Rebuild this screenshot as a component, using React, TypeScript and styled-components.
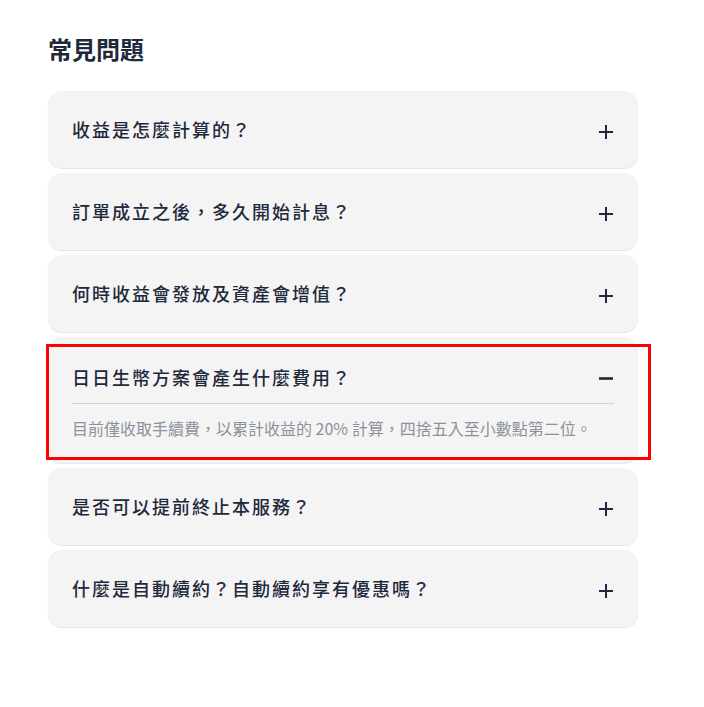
import React, { useState } from "react";
import styled, { createGlobalStyle } from "styled-components";

const Global = createGlobalStyle`
  html, body { margin: 0; padding: 0; background: #ffffff; }
  body { font-family: "Noto Sans CJK TC", "Noto Sans", sans-serif; }
  * { box-sizing: border-box; }
`;

const Page = styled.main`
  padding: 31px 0 40px 48px;
  width: 638px;
`;

const Title = styled.h2`
  margin: 0 0 24px;
  font-size: 24px;
  line-height: 36px;
  font-weight: 700;
  color: #1e293b;
  letter-spacing: 0;
`;

const List = styled.div`
  display: flex;
  flex-direction: column;
  gap: 5px;
`;

const Card = styled.div<{ $open: boolean }>`
  position: relative;
  background: #f4f4f5;
  border-radius: 14px;
  padding: 0 24px;
  box-shadow: 0 1px 1px rgba(203, 213, 225, 0.6);
`;

const Header = styled.button<{ $open: boolean }>`
  all: unset;
  display: flex;
  align-items: center;
  justify-content: space-between;
  width: 100%;
  cursor: pointer;
  padding: ${(p) => (p.$open ? "27px 0 12px" : "25px 0")};
  border-bottom: ${(p) => (p.$open ? "1px solid #cbd5e1" : "none")};
`;

const Question = styled.span`
  font-size: 18px;
  line-height: 27px;
  font-weight: 500;
  color: #1e293b;
  letter-spacing: 2px;
`;

const IconBox = styled.span`
  display: flex;
  width: 16px;
  height: 16px;
  margin-top: 5px;
  color: #1e293b;
`;

const Answer = styled.p`
  margin: 0;
  padding: 12px 0 23px;
  font-size: 16px;
  line-height: 24px;
  color: #8c929b;
  letter-spacing: 0;
`;

const Highlight = styled.div`
  position: absolute;
  left: -2px;
  top: 7px;
  width: 605px;
  height: 116px;
  border: 3px solid #ff0000;
  pointer-events: none;
`;

const Plus = () => (
  <svg width="16" height="16" viewBox="0 0 16 16" fill="none">
    <path d="M8 1v14M1 8h14" stroke="currentColor" strokeWidth="2" />
  </svg>
);

const Minus = () => (
  <svg width="16" height="16" viewBox="0 0 16 16" fill="none">
    <path d="M1 6.5h14" stroke="currentColor" strokeWidth="2.6" />
  </svg>
);

const faqs = [
  { q: "收益是怎麼計算的？", a: "" },
  { q: "訂單成立之後，多久開始計息？", a: "" },
  { q: "何時收益會發放及資產會增值？", a: "" },
  {
    q: "日日生幣方案會產生什麼費用？",
    a: "目前僅收取手續費，以累計收益的 20% 計算，四捨五入至小數點第二位。",
  },
  { q: "是否可以提前終止本服務？", a: "" },
  { q: "什麼是自動續約？自動續約享有優惠嗎？", a: "" },
];

export default function App() {
  const [open, setOpen] = useState<number | null>(3);
  return (
    <>
      <Global />
      <Page>
        <Title>常見問題</Title>
        <List>
          {faqs.map((f, i) => {
            const isOpen = open === i;
            return (
              <Card key={i} $open={isOpen}>
                <Header $open={isOpen} onClick={() => setOpen(isOpen ? null : i)}>
                  <Question>{f.q}</Question>
                  <IconBox>{isOpen ? <Minus /> : <Plus />}</IconBox>
                </Header>
                {isOpen && <Answer>{f.a}</Answer>}
                {isOpen && <Highlight />}
              </Card>
            );
          })}
        </List>
      </Page>
    </>
  );
}
